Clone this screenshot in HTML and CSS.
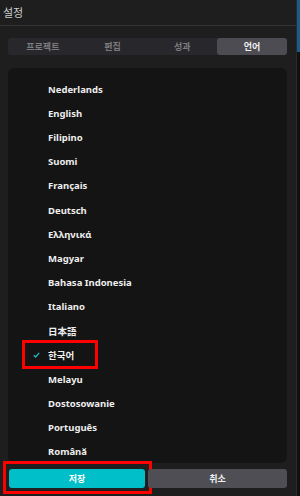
FILE: index.html
```html
<!DOCTYPE html>
<html lang="ko">
<head>
    <meta charset="UTF-8">
    <meta name="viewport" content="width=device-width, initial-scale=1.0">
    <title>설정</title>
    <link rel="stylesheet" href="styles.css">
</head>
<body>

<div class="screen">
    <div class="window">
        <!-- Title -->
        <div class="header">설정</div>

        <!-- Tabs -->
        <div class="tabs">
            <div class="tab">프로젝트</div>
            <div class="tab">편집</div>
            <div class="tab">성과</div>
            <div class="tab active">언어</div>
        </div>

        <!-- Language list -->
        <ul class="lang-list">
            <li><span class="check"></span>Nederlands</li>
            <li><span class="check"></span>English</li>
            <li><span class="check"></span>Filipino</li>
            <li><span class="check"></span>Suomi</li>
            <li><span class="check"></span>Français</li>
            <li><span class="check"></span>Deutsch</li>
            <li><span class="check"></span>Ελληνικά</li>
            <li><span class="check"></span>Magyar</li>
            <li><span class="check"></span>Bahasa Indonesia</li>
            <li><span class="check"></span>Italiano</li>
            <li><span class="check"></span>日本語</li>
            <li class="selected marked">
                <span class="check">
                    <svg width="7" height="6" viewBox="0 0 7 6"><path d="M0.8 3.2 L2.6 5 L6.2 0.9" fill="none" stroke="#1fb8c0" stroke-width="1.3"/></svg>
                </span>한국어
            </li>
            <li><span class="check"></span>Melayu</li>
            <li><span class="check"></span>Dostosowanie</li>
            <li><span class="check"></span>Português</li>
            <li><span class="check"></span>Română</li>
        </ul>

        <!-- Footer buttons -->
        <div class="actions">
            <button class="btn primary marked">저장</button>
            <button class="btn">취소</button>
        </div>
    </div>
    <div class="edge"></div>
</div>

</body>
</html>
```

FILE: styles.css
```css
html, body {
    margin: 0;
    padding: 0;
}
body {
    background: #1e1e1e;
    font-family: "Noto Sans", "Noto Sans CJK KR", sans-serif;
    color: #e8e8e8;
}
.screen {
    display: flex;
    width: 300px;
    height: 496px;
    overflow: hidden;
}
.window {
    flex: 1;
    display: flex;
    flex-direction: column;
    background: #1e1e1e;
}
.edge {
    width: 3px;
    border-left: 1px solid #2a2a2a;
    background: linear-gradient(#1c5a8a 0, #1c5a8a 52px, #111 52px);
}
.header {
    height: 25px;
    line-height: 25px;
    padding-left: 3px;
    font-family: "Noto Sans CJK KR", sans-serif;
    font-size: 11px;
    color: #cfcfcf;
    border-bottom: 1px solid #333;
}
.tabs {
    display: flex;
    margin: 12px 9px 0 8px;
    height: 17px;
    background: #28282c;
    border-radius: 3px;
}
.tab {
    flex: 1;
    text-align: center;
    line-height: 17px;
    font-family: "Noto Sans CJK KR", sans-serif;
    font-size: 9px;
    font-weight: 700;
    color: #7c7c80;
    border-radius: 3px;
}
.tab.active {
    background: #4c4c52;
    color: #f2f2f2;
}
.lang-list {
    list-style: none;
    margin: 13px 9px 0 8px;
    padding: 9px 0 0 0;
    height: 386px;
    overflow: hidden;
    background: #141414;
    border-radius: 6px;
}
.lang-list li {
    position: relative;
    display: flex;
    align-items: center;
    height: 24.2px;
    padding-left: 25px;
    font-size: 9.5px;
    font-weight: 700;
    color: #eeeeee;
}
.check {
    display: flex;
    align-items: center;
    width: 15px;
}
.lang-list li.selected {
    font-family: "Noto Sans CJK KR", sans-serif;
}
.lang-list li.marked::after {
    content: "";
    position: absolute;
    left: 14px;
    top: -3px;
    width: 70px;
    height: 23px;
    border: 3px solid #ff0000;
}
.actions {
    display: flex;
    gap: 3px;
    margin: 6px 9px 0 9px;
}
.btn {
    position: relative;
    flex: 1;
    height: 19px;
    border: none;
    border-radius: 3px;
    background: #4e4e54;
    color: #f0f0f0;
    font-family: "Noto Sans CJK KR", sans-serif;
    font-size: 9px;
    font-weight: 700;
    padding: 0;
}
.btn.primary {
    flex: 0 0 136px;
    background: #00bfc9;
    color: #ffffff;
}
.btn.marked::after {
    content: "";
    position: absolute;
    left: -6px;
    top: -8px;
    width: 143px;
    height: 27px;
    border: 3px solid #ff0000;
}
```
